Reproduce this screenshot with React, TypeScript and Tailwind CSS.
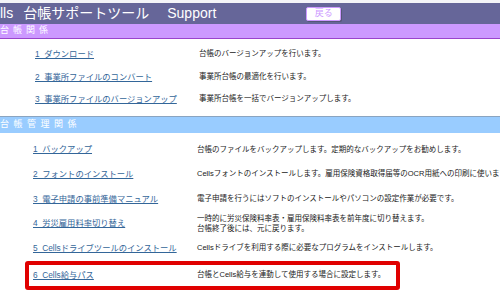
const font = { fontFamily: '"Liberation Sans", "Noto Sans CJK JP", sans-serif' };

type Item = { link: string; desc: string[]; h: string };

const daichoItems: Item[] = [
  { link: '1  ダウンロード', desc: ['台帳のバージョンアップを行います。'], h: 'h-[22.5px]' },
  { link: '2  事業所ファイルのコンバート', desc: ['事業所台帳の最適化を行います。'], h: 'h-[22.5px]' },
  { link: '3  事業所ファイルのバージョンアップ', desc: ['事業所台帳を一括でバージョンアップします。'], h: 'h-[22.5px]' },
];

const kanriItems: Item[] = [
  { link: '1  バックアップ', desc: ['台帳のファイルをバックアップします。定期的なバックアップをお勧めします。'], h: 'h-[24px]' },
  {
    link: '2  フォントのインストール',
    desc: ['Cellsフォントのインストールします。雇用保険資格取得届等のOCR用紙への印刷に使います。'],
    h: 'h-[25px]',
  },
  { link: '3  電子申請の事前準備マニュアル', desc: ['電子申請を行うにはソフトのインストールやパソコンの設定作業が必要です。'], h: 'h-[25px]' },
  {
    link: '4  労災雇用料率切り替え',
    desc: ['一時的に労災保険料率表・雇用保険料率表を前年度に切り替えます。', '台帳終了後には、元に戻ります。'],
    h: 'h-[24px]',
  },
  { link: '5  Cellsドライブツールのインストール', desc: ['Cellsドライブを利用する際に必要なプログラムをインストールします。'], h: 'h-[25px]' },
];

function Row({ item, first, pl }: { item: Item; first: string; pl: string }) {
  return (
    <div className={`grid ${first} items-center ${item.h}`}>
      <a href="#" className={`${pl} text-[8.3px] text-[#336699] underline whitespace-pre leading-none`}>
        {item.link}
      </a>
      <div className="text-[7.5px] text-[#222] whitespace-nowrap leading-[10px]">
        {item.desc.map((d) => (
          <div key={d}>{d}</div>
        ))}
      </div>
    </div>
  );
}

export default function App() {
  return (
    <div className="w-[500px] h-[308px] overflow-hidden bg-white" style={font}>
      <div className="h-[3px] bg-[#f4f4f8]" />
      <div className="h-[21px] bg-[#666699] flex items-center text-white text-[14px] whitespace-nowrap">
        <span>lls</span>
        <span className="ml-[10px]">台帳サポートツール</span>
        <span className="ml-[18px]">Support</span>
        <button className="ml-[90px] w-[35px] h-[14px] bg-white border border-[#cc99ff] rounded-[2px] shadow-[1px_1px_0_#555577] text-[#cc99ff] text-[9px] leading-none flex items-center justify-center">
          戻る
        </button>
      </div>
      <div className="h-[15px] bg-[#cc99ff] border-b border-[#9944cc] flex items-center text-white text-[9px] tracking-[4px]">
        台帳関係
      </div>

      <div className="pt-[4px] pb-[5px]">
        {daichoItems.map((it) => (
          <Row key={it.link} item={it} first="grid-cols-[199px_1fr]" pl="pl-[35px]" />
        ))}
      </div>

      <div className="h-[17px] bg-[#99ccff] border-t border-[#8aa4c0] flex items-center text-white text-[9px] tracking-[4.5px]">
        台帳管理関係
      </div>

      <div className="pt-[5px]">
        {kanriItems.map((it) => (
          <Row key={it.link} item={it} first="grid-cols-[197px_1fr]" pl="pl-[33px]" />
        ))}
        <div className="ml-[25px] w-[375px] h-[29px] border-4 border-[#e00000] rounded-[3px] flex items-center">
          <div className="grid grid-cols-[168px_1fr] items-center w-full">
            <a href="#" className="pl-[4px] text-[8.3px] text-[#336699] underline whitespace-pre leading-none">
              {'6  Cells給与パス'}
            </a>
            <div className="text-[7.5px] text-[#222] whitespace-nowrap leading-[10px]">
              台帳とCells給与を連動して使用する場合に設定します。
            </div>
          </div>
        </div>
      </div>
    </div>
  );
}
